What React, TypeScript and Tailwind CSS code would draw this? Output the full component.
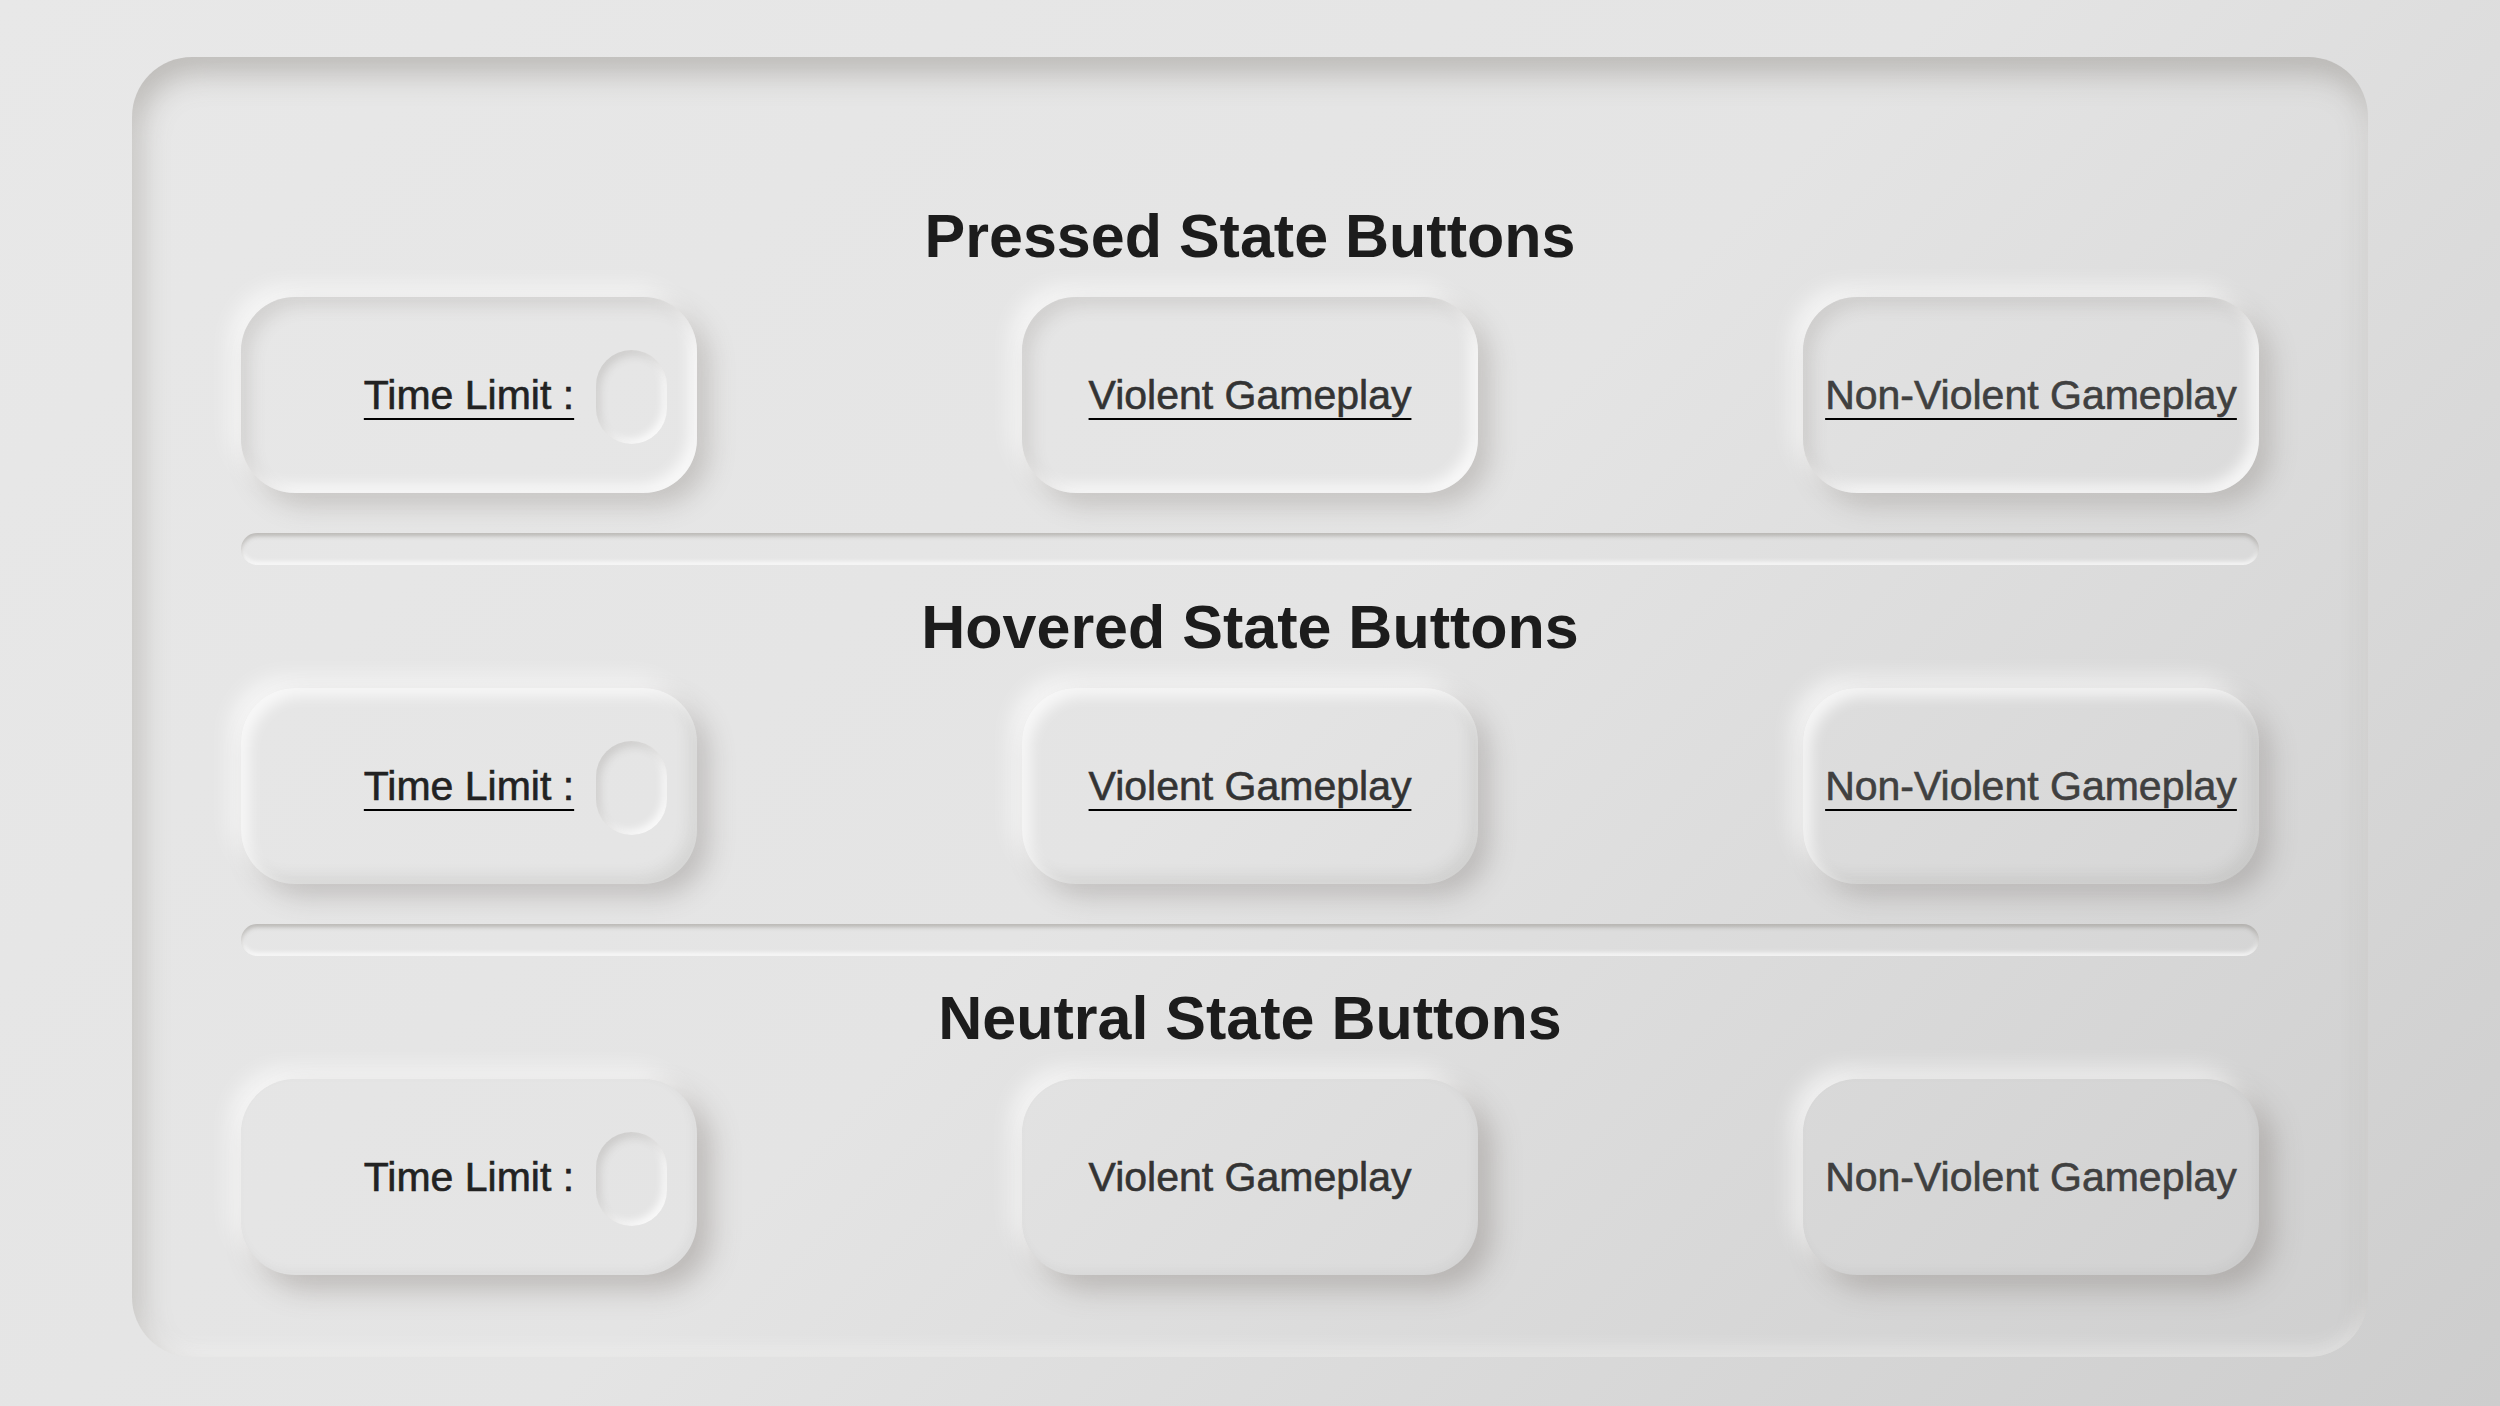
import React from 'react';

type Variant = 'pressed' | 'hovered' | 'neutral';

const sections: { title: string; variant: Variant }[] = [
    { title: 'Pressed State Buttons', variant: 'pressed' },
    { title: 'Hovered State Buttons', variant: 'hovered' },
    { title: 'Neutral State Buttons', variant: 'neutral' },
];

const btnShadow: Record<Variant, string> = {
    pressed:
        'shadow-[12px_12px_26px_rgba(110,104,98,0.28),-10px_-10px_22px_rgba(255,255,255,0.7),inset_9px_9px_16px_rgba(110,104,98,0.16),inset_-8px_-8px_14px_rgba(255,255,255,0.75)]',
    hovered:
        'shadow-[12px_12px_26px_rgba(110,104,98,0.3),-10px_-10px_22px_rgba(255,255,255,0.7),inset_8px_8px_14px_rgba(255,255,255,0.7),inset_-8px_-8px_14px_rgba(110,104,98,0.12)]',
    neutral:
        'shadow-[14px_14px_28px_rgba(110,104,98,0.34),-10px_-10px_22px_rgba(255,255,255,0.7),inset_-4px_-4px_10px_rgba(110,104,98,0.06)]',
};

function Pill({ variant, children, toggle }: { variant: Variant; children: React.ReactNode; toggle?: boolean }) {
    const underline = variant !== 'neutral';
    return (
        <div className={`relative w-[456px] h-[196px] rounded-[54px] flex items-center justify-center ${btnShadow[variant]}`}>
            <span
                className={`text-[41px] leading-none [-webkit-text-stroke:0.6px_currentColor] ${underline ? 'underline decoration-2 underline-offset-[9px]' : ''}`}
            >
                {children}
            </span>
            {toggle && (
                <div className="absolute right-[30px] top-[53px] w-[71px] h-[94px] rounded-full shadow-[inset_4px_5px_9px_rgba(110,104,98,0.2),inset_-4px_-4px_8px_rgba(255,255,255,0.85)]" />
            )}
        </div>
    );
}

function Divider() {
    // thin recessed groove between sections
    return (
        <div className="mt-[40px] mb-[26px] h-[32px] w-full rounded-full shadow-[inset_0_3px_4px_rgba(110,104,98,0.38),inset_0_-3px_5px_rgba(255,255,255,0.85)]" />
    );
}

export default function App() {
    return (
        <div className="min-h-screen w-full pt-[57px] bg-[linear-gradient(135deg,#e8e8e8_0%,#e4e4e4_50%,#cdcdcd_100%)] font-['Liberation_Sans',Arial,sans-serif]">
            <div className="mx-auto w-[2236px] h-[1300px] rounded-[60px] pt-[143px] shadow-[inset_6px_16px_30px_rgba(110,104,98,0.36),inset_0_-8px_18px_rgba(255,255,255,0.5)]">
                <div className="mx-auto w-[2018px] flex flex-col">
                    {sections.map((s, i) => (
                        <React.Fragment key={s.title}>
                            {i > 0 && <Divider />}
                            <h2 className="h-[72px] leading-[72px] text-center text-[61px] font-bold text-[#1c1c1c]">
                                {s.title}
                            </h2>
                            <div className="mt-[25px] flex justify-between">
                                <Pill variant={s.variant} toggle>
                                    <span className="text-[#222222]">Time Limit :</span>
                                </Pill>
                                <Pill variant={s.variant}>
                                    <span className="text-[#333333]">Violent Gameplay</span>
                                </Pill>
                                <Pill variant={s.variant}>
                                    <span className="text-[#404040]">Non-Violent Gameplay</span>
                                </Pill>
                            </div>
                        </React.Fragment>
                    ))}
                </div>
            </div>
        </div>
    );
}
